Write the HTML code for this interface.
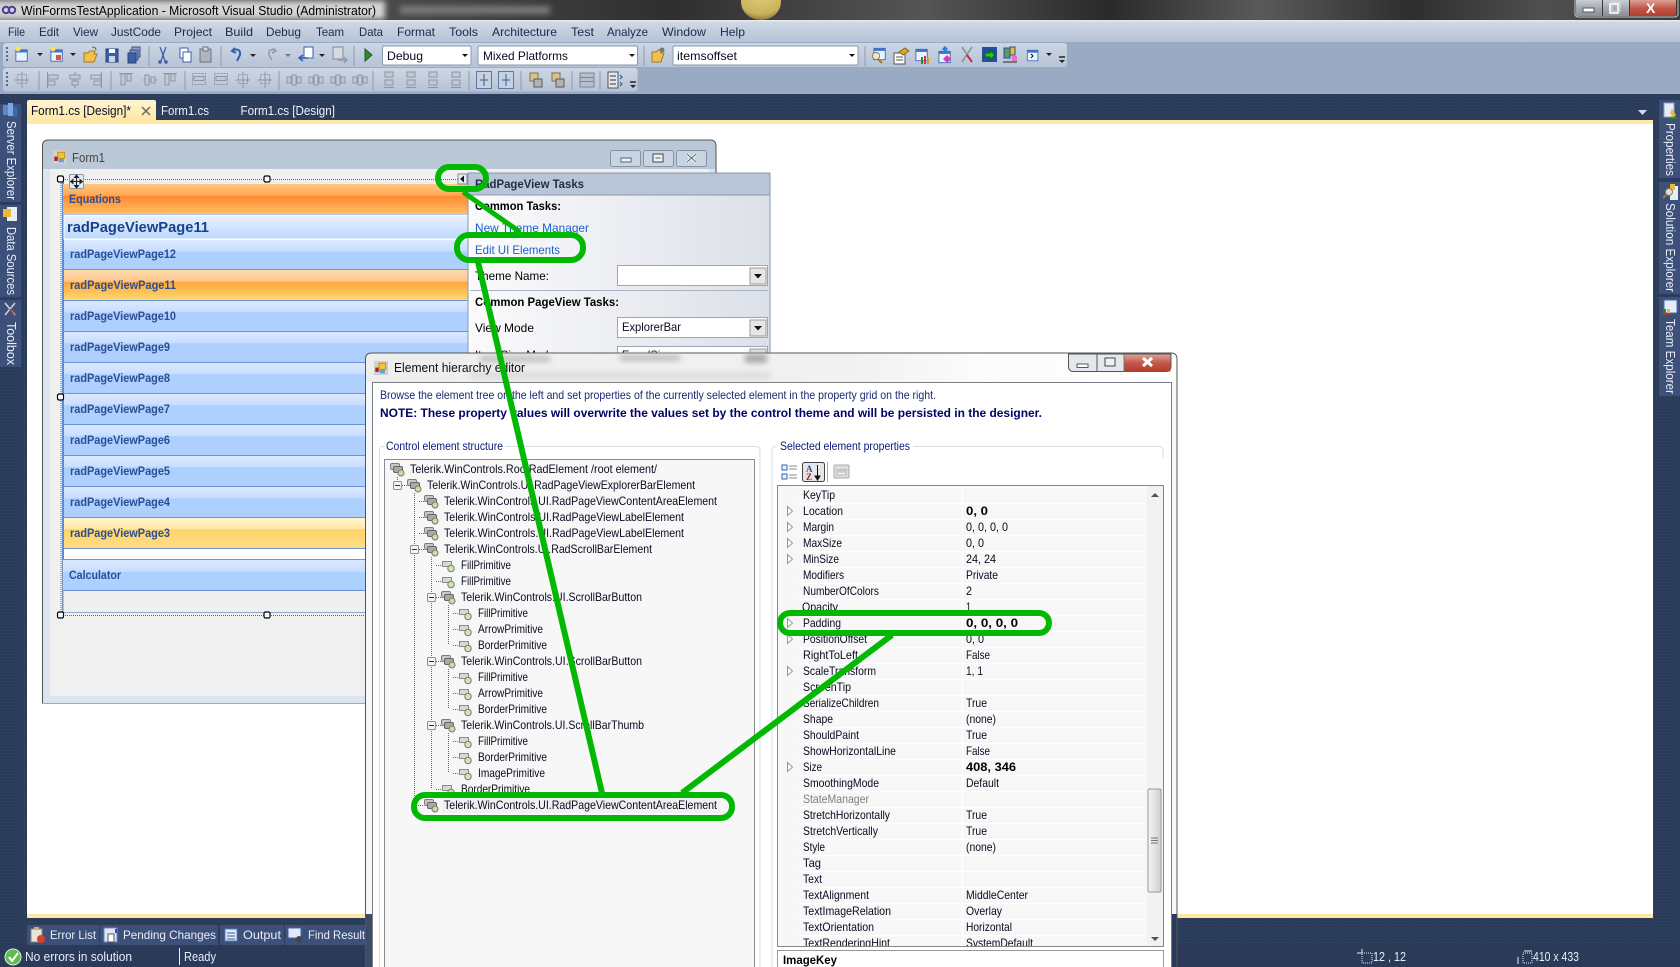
<!DOCTYPE html>
<html><head><meta charset="utf-8"><title>WinFormsTestApplication - Microsoft Visual Studio</title>
<style>
html,body{margin:0;padding:0;background:#fff;width:1680px;height:967px;overflow:hidden}
svg{display:block}
text{font-family:"Liberation Sans",sans-serif;font-size:12px;fill:#000;white-space:pre}
.b{font-weight:bold}
.m{fill:#1c2a44}
.w{fill:#e9eef8}
.it{fill:#2b4f94;font-weight:bold}
.d{fill:#1a2a70}
.n{fill:#0a0a20}
.lk{fill:#1a5fd0}
.dot{stroke:#666;stroke-width:1;stroke-dasharray:1 1;fill:none}
.g{fill:none;stroke:#03b803;stroke-width:6}
.tg{fill:none;stroke:#8c95a5;stroke-width:1}
</style></head><body>
<svg xmlns="http://www.w3.org/2000/svg" width="1680" height="967" viewBox="0 0 1680 967">
<defs>
<filter id="bl3" x="-30%" y="-100%" width="160%" height="300%"><feGaussianBlur stdDeviation="3"/></filter>
<filter id="bl8" x="-30%" y="-200%" width="160%" height="500%"><feGaussianBlur stdDeviation="8"/></filter>
<pattern id="dots" width="3" height="3" patternUnits="userSpaceOnUse"><rect width="3" height="3" fill="#2b3c5b"/><rect width="1" height="1" fill="#344769"/></pattern>
<linearGradient id="tb" x1="0" x2="1" y1="0" y2="0"><stop offset="0" stop-color="#6a6a6a"/><stop offset=".22" stop-color="#4c4c4c"/><stop offset=".4" stop-color="#2f2f2f"/><stop offset=".55" stop-color="#555"/><stop offset=".66" stop-color="#2a2a2a"/><stop offset=".75" stop-color="#5a5a5a"/><stop offset=".84" stop-color="#2e2e2e"/><stop offset=".92" stop-color="#505050"/><stop offset="1" stop-color="#3a3a3a"/></linearGradient>
<linearGradient id="men" x1="0" x2="0" y1="0" y2="1"><stop offset="0" stop-color="#cfd9e6"/><stop offset="1" stop-color="#b5c2d6"/></linearGradient>
<linearGradient id="tool" x1="0" x2="0" y1="0" y2="1"><stop offset="0" stop-color="#ccd6e4"/><stop offset="1" stop-color="#b7c3d6"/></linearGradient>
<linearGradient id="atab" x1="0" x2="0" y1="0" y2="1"><stop offset="0" stop-color="#fff4d4"/><stop offset="1" stop-color="#ffe8a6"/></linearGradient>
<linearGradient id="ft" x1="0" x2="0" y1="0" y2="1"><stop offset="0" stop-color="#b9c7d6"/><stop offset="1" stop-color="#d8e5f1"/></linearGradient>
<linearGradient id="ib" x1="0" x2="0" y1="0" y2="1"><stop offset="0" stop-color="#dce9ff"/><stop offset=".39" stop-color="#c8deff"/><stop offset=".4" stop-color="#aed0ff"/><stop offset="1" stop-color="#aed0ff"/></linearGradient>
<linearGradient id="ieq" x1="0" x2="0" y1="0" y2="1"><stop offset="0" stop-color="#ffc882"/><stop offset=".38" stop-color="#ffa850"/><stop offset=".4" stop-color="#ff8a32"/><stop offset="1" stop-color="#ffbe62"/></linearGradient>
<linearGradient id="i11" x1="0" x2="0" y1="0" y2="1"><stop offset="0" stop-color="#ffdcb0"/><stop offset=".39" stop-color="#ffc58c"/><stop offset=".4" stop-color="#ffa63e"/><stop offset="1" stop-color="#ffd972"/></linearGradient>
<linearGradient id="i3" x1="0" x2="0" y1="0" y2="1"><stop offset="0" stop-color="#fff7d2"/><stop offset=".39" stop-color="#ffe9a8"/><stop offset=".4" stop-color="#ffd369"/><stop offset="1" stop-color="#ffdd84"/></linearGradient>
<linearGradient id="itl" x1="0" x2="0" y1="0" y2="1"><stop offset="0" stop-color="#eaf3ff"/><stop offset="1" stop-color="#bcd8ff"/></linearGradient>
<linearGradient id="pan" x1="0" x2="1" y1="0" y2="0"><stop offset="0" stop-color="#fbfbfc"/><stop offset="1" stop-color="#dce0e8"/></linearGradient>
<linearGradient id="dtl" x1="0" x2="1" y1="0" y2="0"><stop offset="0" stop-color="#eeeeee"/><stop offset=".6" stop-color="#f1f1f1"/><stop offset=".75" stop-color="#fbfbfb"/><stop offset="1" stop-color="#ffffff"/></linearGradient>
<linearGradient id="cl" x1="0" x2="0" y1="0" y2="1"><stop offset="0" stop-color="#dca196"/><stop offset=".5" stop-color="#c2584a"/><stop offset="1" stop-color="#b63c2c"/></linearGradient>
<linearGradient id="glass" x1="0" x2="0" y1="0" y2="1"><stop offset="0" stop-color="#c9ced6"/><stop offset=".5" stop-color="#a5aab2"/><stop offset="1" stop-color="#8a8f97"/></linearGradient>
<linearGradient id="sb" x1="0" x2="1" y1="0" y2="0"><stop offset="0" stop-color="#f6f6f6"/><stop offset="1" stop-color="#cfcfcf"/></linearGradient>
<radialGradient id="sun" cx=".5" cy=".2" r=".8"><stop offset="0" stop-color="#e4d382"/><stop offset=".8" stop-color="#c9b25a"/><stop offset="1" stop-color="#8a7a3e"/></radialGradient>
<pattern id="rows" x="799" y="487" width="10" height="16" patternUnits="userSpaceOnUse"><rect width="10" height="16" fill="#f7f7f7"/><rect y="0" width="10" height="1.4" fill="#ffffff"/></pattern>

<symbol id="ti" viewBox="0 0 15 15" overflow="visible"><rect x=".5" y="1.5" width="9" height="6" rx="1.5" fill="#c8c8c8" stroke="#7c7c7c"/><rect x="3.5" y="4.5" width="9" height="6" rx="1.5" fill="#a9a9a9" stroke="#666"/><circle cx="11" cy="11" r="3" fill="#c9dcb0" stroke="#6d7f62"/></symbol>
<symbol id="ts" viewBox="0 0 15 15" overflow="visible"><rect x="1.5" y="3.5" width="9" height="5" fill="#d8d8d8" stroke="#8a8a8a"/><circle cx="10" cy="10.5" r="3.2" fill="#d3e6ba" stroke="#6d7f62"/></symbol>
<symbol id="fi" viewBox="0 0 16 16" overflow="visible"><rect x=".5" y=".5" width="15" height="15" fill="#d3d3d3" stroke="#ccc"/><rect x="1.5" y="7.5" width="4" height="5" fill="#b32020"/><rect x="5.5" y="2.5" width="8" height="7" fill="#f3c52f" stroke="#b28b14"/><rect x="6.5" y="10" width="6" height="4" fill="#6e9bd8"/></symbol>
<symbol id="exp" viewBox="0 0 9 9" overflow="visible"><rect x=".5" y=".5" width="8" height="8" rx="1" fill="#f5f5f5" stroke="#8b8f99"/><path d="M2 4.500h5" stroke="#333"/></symbol>
<symbol id="tri" viewBox="0 0 6 10" overflow="visible"><path d="M.5.5L5.500 5L.5 9.500Z" fill="#fff" stroke="#9a9a9a"/></symbol>

<symbol id="g1" viewBox="0 0 16 18" overflow="visible"><rect x="3.5" y="3.5" width="9" height="9" fill="none" class="tg" stroke-dasharray="2 1"/><path d="M8 .5V17M.5 9H15" class="tg"/></symbol>
<symbol id="g2" viewBox="0 0 16 18" overflow="visible"><path d="M2.5 1V17" class="tg"/><rect x="3" y="4" width="10" height="4" fill="#c3cad6" stroke="#8c95a5"/><rect x="3" y="10" width="7" height="4" fill="#c3cad6" stroke="#8c95a5"/></symbol>
<symbol id="g3" viewBox="0 0 16 18" overflow="visible"><path d="M8 1V17" class="tg"/><rect x="3" y="4" width="10" height="4" fill="#c3cad6" stroke="#8c95a5"/><rect x="5" y="10" width="6" height="4" fill="#c3cad6" stroke="#8c95a5"/></symbol>
<symbol id="g4" viewBox="0 0 16 18" overflow="visible"><path d="M13.500 1V17" class="tg"/><rect x="3" y="4" width="10" height="4" fill="#c3cad6" stroke="#8c95a5"/><rect x="6" y="10" width="7" height="4" fill="#c3cad6" stroke="#8c95a5"/></symbol>
<symbol id="g5" viewBox="0 0 16 18" overflow="visible"><path d="M1 2.500H15" class="tg"/><rect x="3" y="3" width="4" height="11" fill="#c3cad6" stroke="#8c95a5"/><rect x="9" y="3" width="4" height="7" fill="#c3cad6" stroke="#8c95a5"/></symbol>
<symbol id="g6" viewBox="0 0 16 18" overflow="visible"><path d="M1 9H15" class="tg"/><rect x="3" y="4" width="4" height="10" fill="#c3cad6" stroke="#8c95a5"/><rect x="9" y="6" width="4" height="6" fill="#c3cad6" stroke="#8c95a5"/></symbol>
<symbol id="g7" viewBox="0 0 16 18" overflow="visible"><rect x="1.5" y="2.500" width="13" height="11" fill="none" stroke="#8c95a5" stroke-dasharray="2 1"/><rect x="3" y="5.500" width="10" height="4" fill="#c3cad6" stroke="#8c95a5"/></symbol>
<symbol id="g8" viewBox="0 0 16 18" overflow="visible"><rect x="1" y="6" width="4" height="6" fill="#c3cad6" stroke="#8c95a5"/><rect x="6" y="4" width="4" height="10" fill="#c3cad6" stroke="#8c95a5"/><rect x="11" y="6" width="4" height="6" fill="#c3cad6" stroke="#8c95a5"/></symbol>
<symbol id="g9" viewBox="0 0 16 18" overflow="visible"><rect x="4" y="1" width="8" height="5" fill="#c3cad6" stroke="#8c95a5"/><rect x="4" y="9" width="8" height="5" fill="#c3cad6" stroke="#8c95a5"/><path d="M3 16.500h10" class="tg"/></symbol>
<symbol id="g10" viewBox="0 0 16 18" overflow="visible"><rect x=".5" y=".5" width="15" height="17" fill="#c6d0df" stroke="#5f7aa5"/><path d="M8 3V15M4 9H12" stroke="#4f6f9e" stroke-width="1.200"/></symbol>
<symbol id="g11" viewBox="0 0 16 18" overflow="visible"><rect x="2" y="2" width="8" height="8" fill="#d8c489" stroke="#7b6f4f"/><rect x="6" y="8" width="8" height="8" fill="#b2b2b2" stroke="#5b5b5b"/></symbol>
<symbol id="g12" viewBox="0 0 16 18" overflow="visible"><rect x="1" y="2" width="14" height="14" fill="#b7bfcc" stroke="#7d8798"/><path d="M1 6.500h14M1 10.500h14" stroke="#7d8798"/></symbol>
<symbol id="g13" viewBox="0 0 16 18" overflow="visible"><rect x="1" y="1" width="10" height="16" fill="#e3e7ef" stroke="#555"/><path d="M3 5h6M3 9h6M3 13h6" stroke="#333"/><path d="M13 4l2 2-2 2M13 11l2 2-2 2" stroke="#2b5fb0" fill="none" stroke-width="1.200"/></symbol>
<symbol id="win" viewBox="0 0 16 16" overflow="visible"><rect x="1" y="1.500" width="13" height="13" fill="#eaf2ff" stroke="#3a66b5"/><rect x="1" y="1.500" width="13" height="3" fill="#3f74cd"/></symbol>
</defs>

<!-- base -->
<rect width="1680" height="967" fill="url(#dots)"/>

<!-- title bar -->
<rect width="1680" height="21" fill="url(#tb)"/>
<rect x="-10" y="1" width="395" height="18" fill="#d4d4d4" filter="url(#bl3)"/>
<rect x="400" y="6" width="150" height="8" fill="#7a7a7a" filter="url(#bl3)"/>
<ellipse cx="761" cy="2" rx="20" ry="18" fill="url(#sun)"/>
<rect y="20" width="1680" height="1.500" fill="#e8e8e8"/>
<circle cx="6" cy="10" r="3.200" fill="none" stroke="#4a3f96" stroke-width="2"/><circle cx="12" cy="10" r="3.200" fill="none" stroke="#4a3f96" stroke-width="2"/>
<text x="21" y="15" textLength="355" lengthAdjust="spacingAndGlyphs" style="font-size:13px">WinFormsTestApplication - Microsoft Visual Studio (Administrator)</text>
<!-- window controls -->
<rect x="1575" y="-3" width="103" height="20" rx="3" fill="#3a3a3a" stroke="#c8c8c8"/>
<rect x="1576" y="0" width="26" height="16" fill="url(#glass)"/>
<rect x="1603" y="0" width="26" height="16" fill="url(#glass)"/>
<rect x="1630" y="0" width="46" height="16" fill="url(#cl)"/>
<rect x="1583" y="8" width="11" height="4" fill="#fff" stroke="#555"/>
<rect x="1610" y="4" width="8" height="9" fill="none" stroke="#fff" stroke-width="1.600"/><rect x="1612" y="2" width="8" height="9" fill="none" stroke="#ddd"/>
<text x="1646" y="13" class="b" style="font-size:14px;fill:#fff">X</text>

<!-- menu and toolbars -->
<rect y="21.500" width="1680" height="21" fill="url(#men)"/>
<rect y="42" width="1680" height="52" fill="#9aaac2"/>
<g class="m">
<text class="m" x="8" y="36" textLength="17" lengthAdjust="spacingAndGlyphs">File</text>
<text class="m" x="39" y="36" textLength="20" lengthAdjust="spacingAndGlyphs">Edit</text>
<text class="m" x="73" y="36" textLength="25" lengthAdjust="spacingAndGlyphs">View</text>
<text class="m" x="111" y="36" textLength="50" lengthAdjust="spacingAndGlyphs">JustCode</text>
<text class="m" x="174" y="36" textLength="38" lengthAdjust="spacingAndGlyphs">Project</text>
<text class="m" x="225" y="36" textLength="28" lengthAdjust="spacingAndGlyphs">Build</text>
<text class="m" x="266" y="36" textLength="35" lengthAdjust="spacingAndGlyphs">Debug</text>
<text class="m" x="316" y="36" textLength="28" lengthAdjust="spacingAndGlyphs">Team</text>
<text class="m" x="359" y="36" textLength="24" lengthAdjust="spacingAndGlyphs">Data</text>
<text class="m" x="397" y="36" textLength="38" lengthAdjust="spacingAndGlyphs">Format</text>
<text class="m" x="449" y="36" textLength="29" lengthAdjust="spacingAndGlyphs">Tools</text>
<text class="m" x="492" y="36" textLength="65" lengthAdjust="spacingAndGlyphs">Architecture</text>
<text class="m" x="571" y="36" textLength="23" lengthAdjust="spacingAndGlyphs">Test</text>
<text class="m" x="607" y="36" textLength="41" lengthAdjust="spacingAndGlyphs">Analyze</text>
<text class="m" x="662" y="36" textLength="44" lengthAdjust="spacingAndGlyphs">Window</text>
<text class="m" x="720" y="36" textLength="25" lengthAdjust="spacingAndGlyphs">Help</text>
</g>

<!-- toolbar 1 -->
<rect x="3" y="43" width="1064" height="24" rx="3" fill="url(#tool)"/>
<path d="M7 47v16" stroke="#5a6a84" stroke-width="2" stroke-dasharray="2 2"/>
<use href="#win" x="15" y="48" width="14" height="15"/><circle cx="18" cy="49" r="2.500" fill="#ffe25c"/>
<path d="M37 53h6l-3 3z" fill="#222"/>
<use href="#win" x="50" y="48" width="14" height="15"/><circle cx="53" cy="49" r="2.500" fill="#ffe25c"/><rect x="56" y="55" width="5" height="5" fill="#d05a3a"/>
<path d="M70 53h6l-3 3z" fill="#222"/>
<path d="M84 53h4l2-2h5l-1 3h3l-3 8H84z" fill="#f1c04f" stroke="#a67a1c"/><path d="M92 47q4 0 4 3" stroke="#2a7f2a" fill="none"/>
<rect x="106" y="49" width="12" height="13" fill="#3d5fa8" stroke="#28407a"/><rect x="109" y="49" width="6" height="4" fill="#fff"/><rect x="109" y="56" width="6" height="6" fill="#c8d4ea"/>
<rect x="132" y="47" width="8" height="10" fill="#8fa3cf" stroke="#3a4f85"/><rect x="130" y="50" width="8" height="10" fill="#7b92c6" stroke="#3a4f85"/><rect x="128" y="53" width="8" height="10" fill="#3d5fa8" stroke="#28407a"/>
<path d="M149 46v20" stroke="#8c99ad"/>
<path d="M160 47l3 8 3-8M163 55l-2 6M163 55l2 6" stroke="#3a5a9c" stroke-width="1.200" fill="none"/><circle cx="160" cy="62" r="1.800" fill="#3d5fa8"/><circle cx="166" cy="62" r="1.800" fill="#3d5fa8"/>
<rect x="180" y="48" width="8" height="10" fill="#fff" stroke="#3d5fa8"/><rect x="183" y="52" width="8" height="10" fill="#fff" stroke="#3d5fa8"/>
<rect x="200" y="49" width="11" height="13" fill="#aeb5c0" stroke="#6b7482"/><rect x="203" y="47" width="5" height="4" fill="#d6d8dc" stroke="#6b7482"/>
<path d="M221 46v20" stroke="#8c99ad"/>
<path d="M233 50q8-2 7 5l-3 6M235 48l-3 3 4 2" stroke="#2b5fb8" stroke-width="2" fill="none"/>
<path d="M250 54h6l-3 3z" fill="#222"/>
<path d="M275 50q-7-2-6 5l3 5M273 48l3 3-4 2" stroke="#8f9bb0" stroke-width="1.600" fill="none"/>
<path d="M285 54h6l-3 3z" fill="#6d7888"/>
<rect x="304" y="47" width="9" height="11" fill="#fff" stroke="#3d5fa8"/><path d="M299 58h9M303 61l-4-3 4-3" stroke="#2b5fb8" stroke-width="1.500" fill="none"/>
<path d="M319 54h6l-3 3z" fill="#222"/>
<rect x="333" y="47" width="10" height="12" fill="#d5d9e0" stroke="#808a99"/><path d="M338 60h9M344 63l3-3-3-3" stroke="#8f9bb0" stroke-width="1.500" fill="none"/>
<path d="M354 46v20" stroke="#8c99ad"/>
<path d="M365 49l7 6-7 6z" fill="#2c8a2c" stroke="#1b5e1b"/>
<rect x="382.500" y="46" width="88.500" height="19" rx="1.500" fill="#fff" stroke="#8c99ad"/>
<text x="387" y="60" textLength="36" lengthAdjust="spacingAndGlyphs" class="n">Debug</text>
<path d="M462 54h6l-3 3z" fill="#111"/>
<rect x="478" y="46" width="159.500" height="19" rx="1.500" fill="#fff" stroke="#8c99ad"/>
<text x="483" y="60" textLength="85" lengthAdjust="spacingAndGlyphs" class="n">Mixed Platforms</text>
<path d="M629 54h6l-3 3z" fill="#111"/>
<path d="M644 46v20" stroke="#8c99ad"/>
<path d="M652 52h4l2-2h4l-1 3h3l-3 9h-9z" fill="#f1c04f" stroke="#a67a1c"/><circle cx="662" cy="50" r="2.500" fill="#777"/>
<rect x="673" y="46" width="185" height="19" rx="1.500" fill="#fff" stroke="#8c99ad"/>
<text x="677" y="60" textLength="60" lengthAdjust="spacingAndGlyphs" class="n">itemsoffset</text>
<path d="M849 54h6l-3 3z" fill="#111"/>
<path d="M865 46v20" stroke="#8c99ad"/>
<use href="#win" x="873" y="47" width="14" height="14"/><circle cx="876" cy="56" r="3.600" fill="#dbe8f8" stroke="#a67a1c"/><path d="M878 59l4 4" stroke="#a67a1c" stroke-width="2"/>
<rect x="894" y="53" width="11" height="11" fill="#fff" stroke="#555"/><path d="M896 57h7M896 60h7" stroke="#555"/><path d="M899 52l6-4 4 3-6 4z" fill="#d9a728" stroke="#8b6a16"/>
<use href="#win" x="915" y="47" width="14" height="16"/><path d="M925 56v8" stroke="#d33" stroke-width="2"/><path d="M922 57v7" stroke="#2a8a2a" stroke-width="2"/><path d="M928 58v6" stroke="#d99a20" stroke-width="2"/>
<use href="#win" x="938" y="50" width="14" height="14"/><path d="M945 46l3 3-3 3-3-3z" fill="#2b7fd0"/><path d="M947 55l4 4-4 4-4-4z" fill="#d63ab8"/>
<path d="M962 47l10 15M972 47l-10 15" stroke="#8a939f" stroke-width="1.600"/><path d="M967 55l5 7" stroke="#c23030" stroke-width="2"/>
<rect x="982" y="47" width="15" height="15" fill="#234f9e"/><path d="M985 53h5v-3l5 5-5 5v-3h-5z" fill="#2fc02f" stroke="#0a6a0a"/>
<rect x="1004" y="48" width="6" height="10" fill="#5f9b5f" stroke="#234f9e"/><rect x="1010" y="47" width="5" height="8" fill="#e8b93a" stroke="#234f9e"/><rect x="1012" y="56" width="5" height="6" fill="#e070c8"/><rect x="1003" y="61" width="14" height="2" fill="#777"/>
<use href="#win" x="1026" y="49" width="14" height="13"/><path d="M1031 54l2 2-2 2" stroke="#111" fill="none"/>
<path d="M1046 53h6l-3 3z" fill="#222"/>
<path d="M1059 57h6" stroke="#222" stroke-width="1.500"/><path d="M1059 60h6l-3 3z" fill="#222"/>

<!-- toolbar 2 -->
<rect x="3" y="68" width="634.500" height="23.500" rx="3" fill="url(#tool)"/>
<path d="M7 72v16" stroke="#5a6a84" stroke-width="2" stroke-dasharray="2 2"/>
<g stroke="#8c99ad">
<path d="M39 71v19M111 71v19M185 71v19M279 71v19M373 71v19M469 71v19M521 71v19M572 71v19M600 71v19"/>
</g>
<use href="#g1" x="14" y="71" width="16" height="18"/>
<use href="#g2" x="45" y="71" width="16" height="18"/>
<use href="#g3" x="67" y="71" width="16" height="18"/>
<use href="#g4" x="88" y="71" width="16" height="18"/>
<use href="#g5" x="118" y="71" width="16" height="18"/>
<use href="#g6" x="142" y="71" width="16" height="18"/>
<use href="#g5" x="162" y="71" width="16" height="18"/>
<use href="#g7" x="191" y="71" width="16" height="18"/>
<use href="#g7" x="213" y="71" width="16" height="18"/>
<use href="#g1" x="235" y="71" width="16" height="18"/>
<use href="#g1" x="257" y="71" width="16" height="18"/>
<use href="#g8" x="286" y="71" width="16" height="18"/>
<use href="#g8" x="308" y="71" width="16" height="18"/>
<use href="#g8" x="330" y="71" width="16" height="18"/>
<use href="#g8" x="352" y="71" width="16" height="18"/>
<use href="#g9" x="381" y="71" width="16" height="18"/>
<use href="#g9" x="403" y="71" width="16" height="18"/>
<use href="#g9" x="425" y="71" width="16" height="18"/>
<use href="#g9" x="448" y="71" width="16" height="18"/>
<use href="#g10" x="476" y="71" width="16" height="18"/>
<use href="#g10" x="498" y="71" width="16" height="18"/>
<use href="#g11" x="528" y="71" width="16" height="18"/>
<use href="#g11" x="550" y="71" width="16" height="18"/>
<use href="#g12" x="579" y="71" width="16" height="18"/>
<use href="#g13" x="607" y="71" width="16" height="18"/>
<path d="M630 82h6" stroke="#222" stroke-width="1.500"/><path d="M630 85h6l-3 3z" fill="#222"/>

<!-- doc tabs -->
<path d="M27 120V102q0-2 2-2h125q2 0 2 2v18z" fill="url(#atab)"/>
<text x="31" y="115" textLength="100" lengthAdjust="spacingAndGlyphs" style="font-size:13px" class="n">Form1.cs [Design]*</text>
<path d="M142 107l8 8M150 107l-8 8" stroke="#6f6a58" stroke-width="1.500"/>
<text x="161" y="115" textLength="48" lengthAdjust="spacingAndGlyphs" style="font-size:13px;fill:#eef2f9">Form1.cs</text>
<text x="240.500" y="115" textLength="94.500" lengthAdjust="spacingAndGlyphs" style="font-size:13px;fill:#eef2f9">Form1.cs [Design]</text>
<path d="M1638 110h9l-4.500 5z" fill="#d5dbe6"/>

<!-- document -->
<rect x="27" y="120" width="1626" height="798" fill="#ffe8a6"/>
<rect x="27" y="124" width="1626" height="790" fill="#ffffff"/>

<!-- left strip -->
<rect x="0" y="104" width="21" height="98" fill="#3d5079"/>
<rect x="0" y="205" width="21" height="92" fill="#3d5079"/>
<rect x="0" y="300" width="21" height="67" fill="#3d5079"/>
<rect x="3" y="105" width="5" height="10" fill="#5a88cc"/><rect x="8" y="103" width="5" height="13" fill="#7fa6de"/><rect x="13" y="107" width="4" height="10" fill="#3868b4"/>
<rect x="7" y="207" width="10" height="14" fill="#e7edf7"/><rect x="3" y="209" width="8" height="8" fill="#e8b93a"/>
<path d="M5 303l10 12M15 303l-10 12" stroke="#cfd5df" stroke-width="1.500"/><path d="M10 309l4 6" stroke="#c23030" stroke-width="1.500"/>
<text transform="translate(7,121) rotate(90)" class="w" textLength="79" lengthAdjust="spacingAndGlyphs" style="font-size:13px">Server Explorer</text>
<text transform="translate(7,227) rotate(90)" class="w" textLength="68" lengthAdjust="spacingAndGlyphs" style="font-size:13px">Data Sources</text>
<text transform="translate(7,322) rotate(90)" class="w" textLength="43" lengthAdjust="spacingAndGlyphs" style="font-size:13px">Toolbox</text>

<!-- right strip -->
<rect x="1659" y="100" width="21" height="78" fill="#3d5079"/>
<rect x="1659" y="182" width="21" height="112" fill="#3d5079"/>
<rect x="1659" y="297" width="21" height="99" fill="#3d5079"/>
<rect x="1664" y="103" width="10" height="14" fill="#e7edf7" stroke="#8fa3c6"/><path d="M1672 109l4 6-3 3-3-5z" fill="#e8b93a"/><rect x="1670" y="117" width="7" height="2" fill="#2a8a2a"/>
<rect x="1670" y="186" width="8" height="14" fill="#e7edf7"/><rect x="1670" y="184" width="5" height="6" fill="#e8b93a"/><circle cx="1669" cy="192" r="3.500" fill="#cfe0f5" stroke="#a67a1c"/><path d="M1666 195l-3 3" stroke="#a67a1c" stroke-width="2"/>
<rect x="1664" y="300" width="13" height="13" fill="#e7edf7" stroke="#3d70c0"/><rect x="1663" y="309" width="3" height="4" fill="#2a8a2a"/><rect x="1667" y="309" width="3" height="4" fill="#e8b93a"/><rect x="1663" y="313" width="6" height="2" fill="#c03030"/>
<text transform="translate(1666,123) rotate(90)" class="w" textLength="53" lengthAdjust="spacingAndGlyphs" style="font-size:13px">Properties</text>
<text transform="translate(1666,203) rotate(90)" class="w" textLength="89" lengthAdjust="spacingAndGlyphs" style="font-size:13px">Solution Explorer</text>
<text transform="translate(1666,319) rotate(90)" class="w" textLength="75" lengthAdjust="spacingAndGlyphs" style="font-size:13px">Team Explorer</text>

<!-- bottom tabs -->
<rect x="27" y="925" width="72" height="20" rx="1" fill="#3d5079"/>
<rect x="100" y="925" width="118" height="20" rx="1" fill="#3d5079"/>
<rect x="220" y="925" width="64" height="20" rx="1" fill="#3d5079"/>
<rect x="285" y="925" width="80" height="20" rx="1" fill="#3d5079"/>
<rect x="31" y="929" width="11" height="13" fill="#e8e4d8" stroke="#8a8a80"/><rect x="34" y="927" width="5" height="3" fill="#c8b070"/><circle cx="41" cy="939" r="4" fill="#d8402a"/>
<rect x="104" y="928" width="13" height="14" fill="#dfe6f2" stroke="#6a88b8"/><rect x="108" y="934" width="6" height="8" fill="#fff" stroke="#555"/><path d="M116 929v4" stroke="#1f4fc0" stroke-width="2"/>
<rect x="225" y="929" width="12" height="12" fill="#e3eaf7" stroke="#4d7cc9"/><path d="M227 933h8M227 936h8M227 939h8" stroke="#3a5a94"/>
<rect x="288" y="928" width="13" height="10" fill="#e3eaf7" stroke="#3a66b5"/><circle cx="299" cy="939" r="3" fill="#444"/>
<text x="50" y="939" textLength="46" lengthAdjust="spacingAndGlyphs" class="w">Error List</text>
<text x="123" y="939" textLength="93" lengthAdjust="spacingAndGlyphs" class="w">Pending Changes</text>
<text x="243" y="939" textLength="38" lengthAdjust="spacingAndGlyphs" class="w">Output</text>
<text x="308" y="939" textLength="57" lengthAdjust="spacingAndGlyphs" class="w">Find Result</text>

<!-- status -->
<rect y="945" width="1680" height="22" fill="#2b3a58"/>
<circle cx="13" cy="957" r="8" fill="#5fbd4f" stroke="#dfe8df"/><path d="M9 957l3 4 6-8" stroke="#fff" stroke-width="2" fill="none"/>
<text x="25" y="961" textLength="107" lengthAdjust="spacingAndGlyphs" class="w" style="font-size:13px">No errors in solution</text>
<path d="M179.500 948v17" stroke="#e9eef8"/>
<text x="184" y="961" textLength="32" lengthAdjust="spacingAndGlyphs" class="w" style="font-size:13px">Ready</text>
<rect x="1362" y="953" width="10" height="10" fill="none" stroke="#e9eef8" stroke-dasharray="1 1"/><path d="M1357 953h5M1362 949v4" stroke="#e9eef8"/>
<text x="1373" y="961" textLength="33" lengthAdjust="spacingAndGlyphs" class="w" style="font-size:13px">12 , 12</text>
<rect x="1523" y="953" width="9" height="10" fill="none" stroke="#e9eef8" stroke-dasharray="1 1"/><path d="M1524 951h8M1518 957v7" stroke="#e9eef8"/>
<text x="1533" y="961" textLength="46" lengthAdjust="spacingAndGlyphs" class="w" style="font-size:13px">410 x 433</text>

<!-- designer form -->
<path d="M42.500 703V146q0-6 6-6H710q6 0 6 6V703z" fill="url(#ft)" stroke="#555"/>
<rect x="43" y="169" width="672" height="534" fill="#dae5f0"/>
<rect x="50" y="169" width="659" height="527" fill="#f0f0f0"/>
<use href="#fi" x="53" y="150" width="14" height="14"/>
<text x="72" y="162" textLength="33" lengthAdjust="spacingAndGlyphs" style="font-size:13px;fill:#444">Form1</text>
<g fill="#c8d4e2" stroke="#8594a8"><rect x="610.500" y="150.500" width="30" height="16" rx="2"/><rect x="643.500" y="150.500" width="30" height="16" rx="2"/><rect x="676.500" y="150.500" width="30" height="16" rx="2"/></g>
<rect x="621" y="158" width="10" height="4" fill="#eef2f6" stroke="#566"/>
<rect x="653" y="154" width="10" height="8" fill="#eef2f6" stroke="#444"/><rect x="655.500" y="157" width="5" height="2" fill="#9aa"/>
<path d="M687 154l9 8M696 154l-9 8" stroke="#f5f7fa" stroke-width="3"/><path d="M687 154l9 8M696 154l-9 8" stroke="#566" stroke-width="1"/>

<!-- page view -->
<rect x="62" y="181" width="406" height="434" fill="#efefef"/>
<rect x="62" y="181" width="2" height="378" fill="#5c8fd0"/>
<rect x="62" y="559" width="1.500" height="56" fill="#7a94b8"/>
<rect x="63" y="184" width="405" height="30" fill="url(#ieq)"/><path d="M63 214.500h405" stroke="#6a94d4"/>
<rect x="64" y="215" width="404" height="24" fill="url(#itl)" stroke="#fff"/><path d="M64 239.500h404" stroke="#fff"/>
<g>
<rect x="64" y="240" width="404" height="29" fill="url(#ib)"/>
<rect x="64" y="269.500" width="404" height="31" fill="url(#i11)"/>
<rect x="64" y="300" width="404" height="31" fill="url(#ib)"/>
<rect x="64" y="331" width="404" height="31" fill="url(#ib)"/>
<rect x="64" y="362" width="404" height="31" fill="url(#ib)"/>
<rect x="64" y="393" width="404" height="31" fill="url(#ib)"/>
<rect x="64" y="424" width="404" height="31" fill="url(#ib)"/>
<rect x="64" y="455" width="404" height="31" fill="url(#ib)"/>
<rect x="64" y="486" width="404" height="31" fill="url(#ib)"/>
<rect x="64" y="517" width="404" height="31" fill="url(#i3)"/>
<rect x="64" y="549" width="404" height="10" fill="#fff"/>
<rect x="63" y="559.500" width="405" height="31" fill="url(#ib)"/>
<path d="M64 269.500H468M64 300.500H468M64 331.500H468M64 362.500H468M64 393.500H468M64 424.500H468M64 455.500H468M64 486.500H468M64 517.500H468M64 548.500H468M63 559.500H468M63 590.500H468" stroke="#6a94d4"/>
</g>
<path d="M62 612.500H468" stroke="#8da7c7"/>
<text x="69" y="203" class="it" textLength="52" lengthAdjust="spacingAndGlyphs">Equations</text>
<text x="67" y="232" class="b" textLength="142" lengthAdjust="spacingAndGlyphs" style="font-size:15px;fill:#15428b">radPageViewPage11</text>
<text x="70" y="258" class="it" textLength="106" lengthAdjust="spacingAndGlyphs">radPageViewPage12</text>
<text x="70" y="289" class="it" textLength="106" lengthAdjust="spacingAndGlyphs">radPageViewPage11</text>
<text x="70" y="320" class="it" textLength="106" lengthAdjust="spacingAndGlyphs">radPageViewPage10</text>
<text x="70" y="351" class="it" textLength="100" lengthAdjust="spacingAndGlyphs">radPageViewPage9</text>
<text x="70" y="382" class="it" textLength="100" lengthAdjust="spacingAndGlyphs">radPageViewPage8</text>
<text x="70" y="413" class="it" textLength="100" lengthAdjust="spacingAndGlyphs">radPageViewPage7</text>
<text x="70" y="444" class="it" textLength="100" lengthAdjust="spacingAndGlyphs">radPageViewPage6</text>
<text x="70" y="475" class="it" textLength="100" lengthAdjust="spacingAndGlyphs">radPageViewPage5</text>
<text x="70" y="506" class="it" textLength="100" lengthAdjust="spacingAndGlyphs">radPageViewPage4</text>
<text x="70" y="537" class="it" textLength="100" lengthAdjust="spacingAndGlyphs">radPageViewPage3</text>
<text x="69" y="579" class="it" textLength="52" lengthAdjust="spacingAndGlyphs">Calculator</text>

<!-- selection -->
<path d="M61 179.500H462M61 179V615M61 615.500H470" class="dot"/>
<g fill="#fff" stroke="#000" stroke-width="1.200"><rect x="57.500" y="176" width="6" height="6" rx="1.500"/><rect x="264" y="176" width="6" height="6" rx="1.500"/><rect x="57.500" y="394" width="6" height="6" rx="1.500"/><rect x="57.500" y="612" width="6" height="6" rx="1.500"/><rect x="264" y="612" width="6" height="6" rx="1.500"/></g>
<rect x="69.500" y="174.500" width="14" height="14" rx="1" fill="#e3ebf5" stroke="#8a96a8"/>
<path d="M76.500 175v13M70.500 181.500h12M76.500 175l-2 2.500h4zM76.500 188l-2-2.500h4zM70.500 181.500l2.500-2v4zM82.500 181.500l-2.500-2v4z" stroke="#222" fill="#222"/>
<rect x="458" y="174" width="9" height="10" fill="#e8edf5" stroke="#7c8796"/><path d="M464 175.500v7l-4-3.500z" fill="#111"/>

<!-- tasks panel -->
<rect x="468" y="173" width="302" height="190" fill="url(#pan)" stroke="#8b97ad"/>
<rect x="468" y="173" width="302" height="22" fill="#b9c4d6" stroke="#8b97ad"/>
<text x="475" y="188" class="b" textLength="109" lengthAdjust="spacingAndGlyphs" style="fill:#1f2d44">RadPageView Tasks</text>
<text x="475" y="210" class="b" textLength="86" lengthAdjust="spacingAndGlyphs">Common Tasks:</text>
<text x="475" y="232" class="lk" textLength="114" lengthAdjust="spacingAndGlyphs">New Theme Manager</text>
<text x="475" y="254" class="lk" textLength="85" lengthAdjust="spacingAndGlyphs">Edit UI Elements</text>
<text x="475" y="280" textLength="74" lengthAdjust="spacingAndGlyphs">Theme Name:</text>
<rect x="617.500" y="265.500" width="150" height="20" fill="#fff" stroke="#9ca5b4"/>
<rect x="750" y="268" width="16" height="16" fill="#e6e6e6" stroke="#999"/><path d="M754 274h8l-4 4.500z" fill="#111"/>
<path d="M470 290.500h298" stroke="#a9b3c3"/>
<text x="475" y="306" class="b" textLength="144" lengthAdjust="spacingAndGlyphs">Common PageView Tasks:</text>
<text x="475" y="332" textLength="59" lengthAdjust="spacingAndGlyphs">View Mode</text>
<rect x="617.500" y="317.500" width="150" height="20" fill="#fff" stroke="#9ca5b4"/>
<text x="622" y="331" textLength="59" lengthAdjust="spacingAndGlyphs" class="n">ExplorerBar</text>
<rect x="750" y="320" width="16" height="16" fill="#e6e6e6" stroke="#999"/><path d="M754 326h8l-4 4.500z" fill="#111"/>
<rect x="617.500" y="346.500" width="150" height="20" fill="#fff" stroke="#9ca5b4"/>
<rect x="750" y="349" width="16" height="16" fill="#e6e6e6" stroke="#999"/>
<text x="475" y="359" textLength="80" lengthAdjust="spacingAndGlyphs">Item Size Mode</text>
<text x="622" y="359" textLength="50" lengthAdjust="spacingAndGlyphs" class="n">EqualSize</text>

<!-- dialog -->
<path d="M365.500 967V359q0-6 6-6H1171q6 0 6 6V967z" fill="url(#dtl)" stroke="#555"/>
<g filter="url(#bl3)">
<rect x="480" y="356" width="70" height="6" fill="#bfbfbf"/>
<rect x="620" y="355" width="60" height="6" fill="#bcbcbc"/>
<rect x="745" y="354" width="22" height="9" fill="#a8a8a8"/>
<rect x="470" y="372" width="300" height="7" fill="#dcdcdc"/>
</g>
<rect x="366" y="382" width="6.500" height="585" fill="#f6f8fa"/>
<rect x="1171" y="382" width="5.500" height="585" fill="#f6f8fa"/>
<rect x="366" y="914" width="6" height="53" fill="#3d4b66"/>
<rect x="1171.500" y="914" width="5" height="53" fill="#2b3a58"/>
<rect x="372.500" y="382.500" width="799" height="600" fill="#fff" stroke="#7a7f88"/>
<use href="#fi" x="374" y="361" width="14" height="14"/>
<text x="394" y="372" textLength="131" lengthAdjust="spacingAndGlyphs" style="font-size:13px;fill:#111">Element hierarchy editor</text>
<path d="M1068.500 354v12q0 5.500 5 5.500H1166q5 0 5-5.500V354z" fill="#e4e7ec" stroke="#555"/>
<rect x="1124" y="354.500" width="46.500" height="17" fill="url(#cl)"/>
<path d="M1097 354v17" stroke="#555"/><path d="M1124 354v17" stroke="#777"/>
<rect x="1077" y="364" width="11" height="3.500" fill="#fff" stroke="#556"/>
<rect x="1105" y="358" width="10" height="8" fill="#eef1f5" stroke="#444"/>
<path d="M1143 358l9 8M1152 358l-9 8" stroke="#fff" stroke-width="3"/>

<text x="380" y="399" class="d" textLength="556" lengthAdjust="spacingAndGlyphs">Browse the element tree on the left and set properties of the currently selected element in the property grid on the right.</text>
<text x="380" y="417" class="b" textLength="662" lengthAdjust="spacingAndGlyphs" style="fill:#000066">NOTE: These property values will overwrite the values set by the control theme and will be persisted in the designer.</text>

<!-- group boxes -->
<path d="M384 446.500h-1q-3.500 0-3.500 4V980M505 446.500h251q4 0 4 4V980" fill="none" stroke="#d5dfe6"/>
<path d="M776 446.500h-1q-3 0-3 4V980M913 446.500h246q4 0 4 4V458" fill="none" stroke="#d5dfe6"/>
<text x="386" y="450" textLength="117" lengthAdjust="spacingAndGlyphs" style="fill:#0a1a7a">Control element structure</text>
<text x="780" y="450" textLength="130" lengthAdjust="spacingAndGlyphs" style="fill:#0a1a7a">Selected element properties</text>

<!-- tree -->
<rect x="384.500" y="459.500" width="370" height="520" fill="#f7f7f7" stroke="#878b93"/>
<path d="M397.500 477V481M414.500 493V805M431.500 557V789M448.500 605V645M448.500 669V709M448.500 733V773M402 485.500h5M419 501.500h5M419 517.500h5M419 533.500h5M419 549.500h5M436 565.500h5M436 581.500h5M436 597.500h5M453 613.500h6M453 629.500h6M453 645.500h6M436 661.500h5M453 677.500h6M453 693.500h6M453 709.500h6M436 725.500h5M453 741.500h6M453 757.500h6M453 773.500h6M436 789.500h6M414 805.500h10" class="dot"/>
<use href="#exp" x="393" y="481" width="9" height="9"/>
<use href="#exp" x="410" y="545" width="9" height="9"/>
<use href="#exp" x="427" y="593" width="9" height="9"/>
<use href="#exp" x="427" y="657" width="9" height="9"/>
<use href="#exp" x="427" y="721" width="9" height="9"/>
<use href="#ti" x="390" y="462" width="15" height="15"/>
<use href="#ti" x="407" y="478" width="15" height="15"/>
<use href="#ti" x="424" y="494" width="15" height="15"/>
<use href="#ti" x="424" y="510" width="15" height="15"/>
<use href="#ti" x="424" y="526" width="15" height="15"/>
<use href="#ti" x="424" y="542" width="15" height="15"/>
<use href="#ts" x="441" y="558" width="15" height="15"/>
<use href="#ts" x="441" y="574" width="15" height="15"/>
<use href="#ti" x="441" y="590" width="15" height="15"/>
<use href="#ts" x="458" y="606" width="15" height="15"/>
<use href="#ts" x="458" y="622" width="15" height="15"/>
<use href="#ts" x="458" y="638" width="15" height="15"/>
<use href="#ti" x="441" y="654" width="15" height="15"/>
<use href="#ts" x="458" y="670" width="15" height="15"/>
<use href="#ts" x="458" y="686" width="15" height="15"/>
<use href="#ts" x="458" y="702" width="15" height="15"/>
<use href="#ti" x="441" y="718" width="15" height="15"/>
<use href="#ts" x="458" y="734" width="15" height="15"/>
<use href="#ts" x="458" y="750" width="15" height="15"/>
<use href="#ts" x="458" y="766" width="15" height="15"/>
<use href="#ts" x="441" y="782" width="15" height="15"/>
<rect x="442" y="797" width="278" height="16" fill="#f0f0f0"/>
<use href="#ti" x="424" y="798" width="15" height="15"/>
<g class="n">
<text class="n" x="410" y="473" textLength="247" lengthAdjust="spacingAndGlyphs">Telerik.WinControls.RootRadElement /root element/</text>
<text class="n" x="427" y="489" textLength="268" lengthAdjust="spacingAndGlyphs">Telerik.WinControls.UI.RadPageViewExplorerBarElement</text>
<text class="n" x="444" y="505" textLength="273" lengthAdjust="spacingAndGlyphs">Telerik.WinControls.UI.RadPageViewContentAreaElement</text>
<text class="n" x="444" y="521" textLength="240" lengthAdjust="spacingAndGlyphs">Telerik.WinControls.UI.RadPageViewLabelElement</text>
<text class="n" x="444" y="537" textLength="240" lengthAdjust="spacingAndGlyphs">Telerik.WinControls.UI.RadPageViewLabelElement</text>
<text class="n" x="444" y="553" textLength="208" lengthAdjust="spacingAndGlyphs">Telerik.WinControls.UI.RadScrollBarElement</text>
<text class="n" x="461" y="569" textLength="50" lengthAdjust="spacingAndGlyphs">FillPrimitive</text>
<text class="n" x="461" y="585" textLength="50" lengthAdjust="spacingAndGlyphs">FillPrimitive</text>
<text class="n" x="461" y="601" textLength="181" lengthAdjust="spacingAndGlyphs">Telerik.WinControls.UI.ScrollBarButton</text>
<text class="n" x="478" y="617" textLength="50" lengthAdjust="spacingAndGlyphs">FillPrimitive</text>
<text class="n" x="478" y="633" textLength="65" lengthAdjust="spacingAndGlyphs">ArrowPrimitive</text>
<text class="n" x="478" y="649" textLength="69" lengthAdjust="spacingAndGlyphs">BorderPrimitive</text>
<text class="n" x="461" y="665" textLength="181" lengthAdjust="spacingAndGlyphs">Telerik.WinControls.UI.ScrollBarButton</text>
<text class="n" x="478" y="681" textLength="50" lengthAdjust="spacingAndGlyphs">FillPrimitive</text>
<text class="n" x="478" y="697" textLength="65" lengthAdjust="spacingAndGlyphs">ArrowPrimitive</text>
<text class="n" x="478" y="713" textLength="69" lengthAdjust="spacingAndGlyphs">BorderPrimitive</text>
<text class="n" x="461" y="729" textLength="183" lengthAdjust="spacingAndGlyphs">Telerik.WinControls.UI.ScrollBarThumb</text>
<text class="n" x="478" y="745" textLength="50" lengthAdjust="spacingAndGlyphs">FillPrimitive</text>
<text class="n" x="478" y="761" textLength="69" lengthAdjust="spacingAndGlyphs">BorderPrimitive</text>
<text class="n" x="478" y="777" textLength="67" lengthAdjust="spacingAndGlyphs">ImagePrimitive</text>
<text class="n" x="461" y="793" textLength="69" lengthAdjust="spacingAndGlyphs">BorderPrimitive</text>
<text class="n" x="444" y="809" textLength="273" lengthAdjust="spacingAndGlyphs">Telerik.WinControls.UI.RadPageViewContentAreaElement</text>
</g>

<!-- property toolbar -->
<rect x="782" y="465" width="5" height="5" fill="#eef3ff" stroke="#2f5fb0"/><rect x="782" y="474" width="5" height="5" fill="#eef3ff" stroke="#2f5fb0"/>
<path d="M789 466h8M789 469h8M789 475h8M789 478h8" stroke="#8a8a8a"/>
<rect x="802.500" y="462.500" width="22" height="19" rx="2" fill="#e6e6e6" stroke="#444"/>
<text x="806" y="472" class="b" style="font-size:9px;fill:#2b4fa8;font-family:'Liberation Serif',serif">A</text>
<text x="806" y="480" class="b" style="font-size:9px;fill:#a02020;font-family:'Liberation Serif',serif">Z</text>
<path d="M817.500 465v13M815 476l2.500 4 2.500-4z" stroke="#111" fill="#111"/>
<path d="M827.500 462v20" stroke="#aaa"/>
<rect x="834" y="465" width="15" height="13" rx="1" fill="#ddd" stroke="#aaa"/><path d="M836 470h11" stroke="#aaa"/><rect x="837" y="472" width="9" height="3" fill="#eee" stroke="#bbb"/>

<!-- property grid -->
<clipPath id="gridc"><rect x="778" y="486" width="385" height="460"/></clipPath>
<rect x="777.500" y="485.500" width="386" height="461" fill="#f7f7f7" stroke="#888"/>
<rect x="799" y="487" width="347" height="459" fill="url(#rows)"/>
<path d="M962.500 487V946" stroke="#fff" stroke-width="1.200"/>
<rect x="1147" y="486" width="16" height="460" fill="#f2f2f2"/>
<path d="M1151 497h8l-4-4z" fill="#555"/><path d="M1151 937h8l-4 4z" fill="#555"/>
<rect x="1148" y="789" width="13" height="103" rx="1.500" fill="url(#sb)" stroke="#999"/>
<path d="M1151 838h7M1151 840.500h7M1151 843h7" stroke="#777"/>
<use href="#tri" x="787" y="506" width="6" height="10"/>
<use href="#tri" x="787" y="522" width="6" height="10"/>
<use href="#tri" x="787" y="538" width="6" height="10"/>
<use href="#tri" x="787" y="554" width="6" height="10"/>
<use href="#tri" x="787" y="618" width="6" height="10"/>
<use href="#tri" x="787" y="634" width="6" height="10"/>
<use href="#tri" x="787" y="666" width="6" height="10"/>
<use href="#tri" x="787" y="762" width="6" height="10"/>
<g clip-path="url(#gridc)">
<text class="n" x="803" y="499" textLength="32" lengthAdjust="spacingAndGlyphs">KeyTip</text>
<text class="n" x="803" y="515" textLength="40" lengthAdjust="spacingAndGlyphs">Location</text>
<text class="n" x="803" y="531" textLength="31" lengthAdjust="spacingAndGlyphs">Margin</text>
<text class="n" x="803" y="547" textLength="39" lengthAdjust="spacingAndGlyphs">MaxSize</text>
<text class="n" x="803" y="563" textLength="36" lengthAdjust="spacingAndGlyphs">MinSize</text>
<text class="n" x="803" y="579" textLength="41" lengthAdjust="spacingAndGlyphs">Modifiers</text>
<text class="n" x="803" y="595" textLength="76" lengthAdjust="spacingAndGlyphs">NumberOfColors</text>
<text class="n" x="802" y="611" textLength="36" lengthAdjust="spacingAndGlyphs">Opacity</text>
<text class="n" x="803" y="627" textLength="38" lengthAdjust="spacingAndGlyphs">Padding</text>
<text class="n" x="803" y="643" textLength="64" lengthAdjust="spacingAndGlyphs">PositionOffset</text>
<text class="n" x="803" y="659" textLength="55" lengthAdjust="spacingAndGlyphs">RightToLeft</text>
<text class="n" x="803" y="675" textLength="73" lengthAdjust="spacingAndGlyphs">ScaleTransform</text>
<text class="n" x="803" y="691" textLength="48" lengthAdjust="spacingAndGlyphs">ScreenTip</text>
<text class="n" x="803" y="707" textLength="76" lengthAdjust="spacingAndGlyphs">SerializeChildren</text>
<text class="n" x="803" y="723" textLength="30" lengthAdjust="spacingAndGlyphs">Shape</text>
<text class="n" x="803" y="739" textLength="56" lengthAdjust="spacingAndGlyphs">ShouldPaint</text>
<text class="n" x="803" y="755" textLength="93" lengthAdjust="spacingAndGlyphs">ShowHorizontalLine</text>
<text class="n" x="803" y="771" textLength="19" lengthAdjust="spacingAndGlyphs">Size</text>
<text class="n" x="803" y="787" textLength="76" lengthAdjust="spacingAndGlyphs">SmoothingMode</text>
<text x="803" y="803" textLength="66" lengthAdjust="spacingAndGlyphs" style="fill:#808080">StateManager</text>
<text class="n" x="803" y="819" textLength="87" lengthAdjust="spacingAndGlyphs">StretchHorizontally</text>
<text class="n" x="803" y="835" textLength="75" lengthAdjust="spacingAndGlyphs">StretchVertically</text>
<text class="n" x="803" y="851" textLength="22" lengthAdjust="spacingAndGlyphs">Style</text>
<text class="n" x="803" y="867" textLength="18" lengthAdjust="spacingAndGlyphs">Tag</text>
<text class="n" x="803" y="883" textLength="19" lengthAdjust="spacingAndGlyphs">Text</text>
<text class="n" x="803" y="899" textLength="66" lengthAdjust="spacingAndGlyphs">TextAlignment</text>
<text class="n" x="803" y="915" textLength="88" lengthAdjust="spacingAndGlyphs">TextImageRelation</text>
<text class="n" x="803" y="931" textLength="71" lengthAdjust="spacingAndGlyphs">TextOrientation</text>
<text class="n" x="803" y="947" textLength="87" lengthAdjust="spacingAndGlyphs">TextRenderingHint</text>
<text class="b" x="966" y="515" textLength="22" lengthAdjust="spacingAndGlyphs">0, 0</text>
<text class="n" x="966" y="531" textLength="42" lengthAdjust="spacingAndGlyphs">0, 0, 0, 0</text>
<text class="n" x="966" y="547" textLength="18" lengthAdjust="spacingAndGlyphs">0, 0</text>
<text class="n" x="966" y="563" textLength="30" lengthAdjust="spacingAndGlyphs">24, 24</text>
<text class="n" x="966" y="579" textLength="32" lengthAdjust="spacingAndGlyphs">Private</text>
<text class="n" x="966" y="595" textLength="6" lengthAdjust="spacingAndGlyphs">2</text>
<text class="n" x="966" y="611" textLength="5" lengthAdjust="spacingAndGlyphs">1</text>
<text class="b" x="966" y="627" textLength="52" lengthAdjust="spacingAndGlyphs">0, 0, 0, 0</text>
<text class="n" x="966" y="643" textLength="18" lengthAdjust="spacingAndGlyphs">0, 0</text>
<text class="n" x="966" y="659" textLength="24" lengthAdjust="spacingAndGlyphs">False</text>
<text class="n" x="966" y="675" textLength="17" lengthAdjust="spacingAndGlyphs">1, 1</text>
<text class="n" x="966" y="707" textLength="21" lengthAdjust="spacingAndGlyphs">True</text>
<text class="n" x="966" y="723" textLength="30" lengthAdjust="spacingAndGlyphs">(none)</text>
<text class="n" x="966" y="739" textLength="21" lengthAdjust="spacingAndGlyphs">True</text>
<text class="n" x="966" y="755" textLength="24" lengthAdjust="spacingAndGlyphs">False</text>
<text class="b" x="966" y="771" textLength="50" lengthAdjust="spacingAndGlyphs">408, 346</text>
<text class="n" x="966" y="787" textLength="33" lengthAdjust="spacingAndGlyphs">Default</text>
<text class="n" x="966" y="819" textLength="21" lengthAdjust="spacingAndGlyphs">True</text>
<text class="n" x="966" y="835" textLength="21" lengthAdjust="spacingAndGlyphs">True</text>
<text class="n" x="966" y="851" textLength="30" lengthAdjust="spacingAndGlyphs">(none)</text>
<text class="n" x="966" y="899" textLength="62" lengthAdjust="spacingAndGlyphs">MiddleCenter</text>
<text class="n" x="966" y="915" textLength="36" lengthAdjust="spacingAndGlyphs">Overlay</text>
<text class="n" x="966" y="931" textLength="46" lengthAdjust="spacingAndGlyphs">Horizontal</text>
<text class="n" x="966" y="947" textLength="67" lengthAdjust="spacingAndGlyphs">SystemDefault</text>
</g>
<rect x="777.500" y="950.500" width="386" height="30" fill="#fff" stroke="#999"/>
<text x="783" y="964" class="b" textLength="54" lengthAdjust="spacingAndGlyphs">ImageKey</text>

<!-- green annotations -->
<path d="M463 192L520 232" class="g" style="stroke-width:5"/>
<path d="M478 262L602 793" class="g"/>
<path d="M892 635L682 793" class="g"/>
<rect x="438" y="167" width="48" height="22" rx="11" class="g"/>
<rect x="457" y="235" width="126" height="25" rx="12" class="g"/>
<rect x="780" y="613" width="269" height="20" rx="10" class="g"/>
<rect x="414" y="795" width="318" height="23" rx="11" class="g"/>
</svg>
</body></html>
